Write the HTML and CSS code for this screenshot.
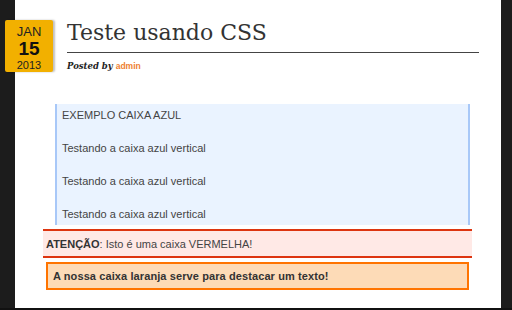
FILE: index.html
```html
<!DOCTYPE html>
<html>
<head>
<meta charset="utf-8">
<link rel="stylesheet" href="styles.css">
</head>
<body>
<div class="frame">
  <div class="side left"></div>
  <div class="page">
    <div class="date">
      <span class="mon">JAN</span>
      <span class="day">15</span>
      <span class="yr">2013</span>
    </div>
    <header class="head">
      <h1 class="title">Teste usando CSS</h1>
      <div class="meta">Posted by <span class="author">admin</span></div>
    </header>
    <div class="content">
      <div class="blue">
        <p>EXEMPLO CAIXA AZUL</p>
        <p>Testando a caixa azul vertical</p>
        <p>Testando a caixa azul vertical</p>
        <p>Testando a caixa azul vertical</p>
      </div>
      <div class="red"><b>ATENÇÃO</b>: Isto é uma caixa VERMELHA!</div>
      <div class="orange">A nossa caixa laranja serve para destacar um texto!</div>
    </div>
  </div>
  <div class="side right"></div>
</div>
</body>
</html>
```

FILE: styles.css
```css
html, body {
  margin: 0;
  padding: 0;
  background: #fff;
}
.frame {
  display: flex;
  width: 512px;
  height: 308px;
  border-bottom: 2px solid #111;
  overflow: hidden;
}
.side {
  background: #1c1c1c;
  flex: none;
}
.side.left { width: 15px; }
.side.right { width: 11px; }
.page {
  flex: 1;
  position: relative;
  background: #fff;
}
.date {
  position: absolute;
  left: -10px;
  top: 20px;
  width: 48px;
  height: 52px;
  background: #f2b000;
  border-radius: 2px;
  box-shadow: 2px 0 2px rgba(0,0,0,0.25);
  display: flex;
  flex-direction: column;
  align-items: center;
  font-family: "Liberation Sans", Arial, sans-serif;
  color: #222;
}
.mon { font-size: 13px; line-height: 14px; margin-top: 5px; }
.day { font-size: 19px; font-weight: bold; line-height: 19px; color: #111; }
.yr { font-size: 11px; line-height: 12px; margin-top: 1px; }
.head {
  margin-left: 52px;
  margin-right: 22px;
  padding-top: 17px;
}
.title {
  margin: 0;
  font-family: "DejaVu Serif", serif;
  font-weight: normal;
  font-size: 22px;
  line-height: 32px;
  color: #333;
  border-bottom: 1px solid #444;
  padding-bottom: 3px;
}
.meta {
  margin-top: 8px;
  font-family: "DejaVu Serif", serif;
  font-style: italic;
  font-weight: bold;
  font-size: 8.5px;
  color: #222;
}
.author {
  font-family: "Liberation Sans", Arial, sans-serif;
  font-style: normal;
  color: #ee8030;
}
.content {
  margin-top: 33px;
  font-family: "Liberation Sans", Arial, sans-serif;
  font-size: 11px;
  color: #444;
}
.blue {
  margin: 0 31px 0 40px;
  background: #eaf3ff;
  border-left: 2px solid #a8c8f8;
  border-right: 2px solid #a8c8f8;
  padding: 5px 5px 4px;
}
.blue p {
  margin: 0 0 20px;
  line-height: 13px;
}
.blue p:last-child { margin-bottom: 0; }
.red {
  margin: 4px 29px 0 28px;
  background: #ffe9e6;
  border-top: 2px solid #dd3510;
  border-bottom: 2px solid #dd3510;
  padding: 6px 3px 5px;
  line-height: 14px;
}
.red b { color: #333; }
.orange {
  margin: 4px 32px 0 31px;
  background: #fddbb7;
  border: 2px solid #ff7400;
  padding: 5px 5px;
  font-weight: bold;
  line-height: 14px;
  color: #333;
  letter-spacing: 0.1px;
}
```
